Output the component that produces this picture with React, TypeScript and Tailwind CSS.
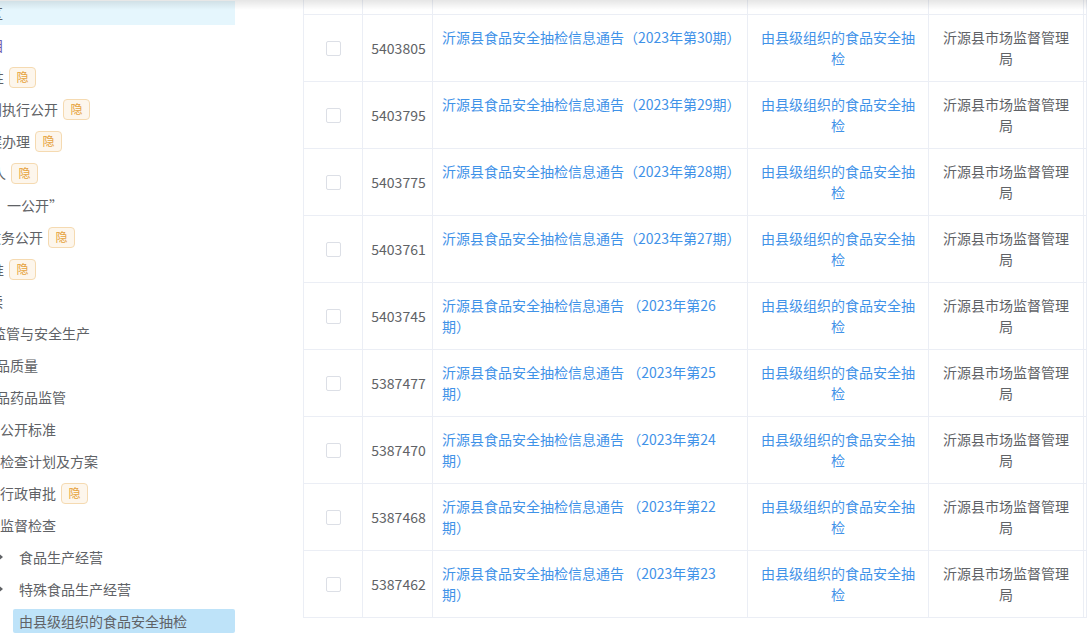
import { type ReactNode } from 'react'

interface TreeRow {
  text: string
  shift: string
  badge?: boolean
  color?: string
  kind?: 'plain' | 'active-top' | 'child' | 'current'
}

interface NoticeRow {
  id: string
  title: string[]
}

const treeRows: TreeRow[] = [
  { text: '区', shift: '-ml-[11px]', kind: 'active-top' },
  { text: '目', shift: '-ml-[10px]', color: 'text-[#6f5fb0]' },
  { text: '性', shift: '-ml-[10px]', badge: true },
  { text: '计划执行公开', shift: '-ml-[26px]', badge: true },
  { text: '建议提案办理', shift: '-ml-[54px]', badge: true },
  { text: '联系人', shift: '-ml-[36px]', badge: true },
  { text: '双随机、一公开”', shift: '-ml-[49px]' },
  { text: '政务公开', shift: '-ml-[13px]', badge: true },
  { text: '准', shift: '-ml-[10px]', badge: true },
  { text: '政策解读', shift: '-ml-[53px]' },
  { text: '食品监管与安全生产', shift: '-ml-[36px]' },
  { text: '产品质量', shift: '-ml-[18px]' },
  { text: '食品药品监管', shift: '-ml-[18px]' },
  { text: '主动公开标准', shift: '-ml-[28px]' },
  { text: '年度检查计划及方案', shift: '-ml-[28px]' },
  { text: '行政审批', shift: 'ml-0', badge: true },
  { text: '监督检查', shift: 'ml-0' },
  { text: '食品生产经营', shift: 'ml-0', kind: 'child' },
  { text: '特殊食品生产经营', shift: 'ml-0', kind: 'child' },
  { text: '由县级组织的食品安全抽检', shift: 'ml-0', kind: 'current' },
]

const notices: NoticeRow[] = [
  { id: '5403805', title: ['沂源县食品安全抽检信息通告（2023年第30期）'] },
  { id: '5403795', title: ['沂源县食品安全抽检信息通告（2023年第29期）'] },
  { id: '5403775', title: ['沂源县食品安全抽检信息通告（2023年第28期）'] },
  { id: '5403761', title: ['沂源县食品安全抽检信息通告（2023年第27期）'] },
  { id: '5403745', title: ['沂源县食品安全抽检信息通告 （2023年第26', '期）'] },
  { id: '5387477', title: ['沂源县食品安全抽检信息通告 （2023年第25', '期）'] },
  { id: '5387470', title: ['沂源县食品安全抽检信息通告 （2023年第24', '期）'] },
  { id: '5387468', title: ['沂源县食品安全抽检信息通告 （2023年第22', '期）'] },
  { id: '5387462', title: ['沂源县食品安全抽检信息通告 （2023年第23', '期）'] },
]

function HiddenTag() {
  return (
    <span className="ml-[5px] inline-flex h-[21px] w-[27px] shrink-0 items-center justify-center rounded-[4px] border border-[#f5dab1] bg-[#fdf6ec] text-[12px] text-[#e6a23c]">
      隐
    </span>
  )
}

function TreeItem({ row }: { row: TreeRow }) {
  const label = (
    <span className={`${row.shift} whitespace-nowrap ${row.color ?? 'text-[#606266]'}`}>{row.text}</span>
  )

  if (row.kind === 'child') {
    return (
      <div className="flex h-8 items-center">
        <div className="flex h-6 items-center">
          <span className="-ml-[2px] h-0 w-0 border-y-[4px] border-l-[5px] border-y-transparent border-l-[#606266]" />
          <span className="ml-[16px] whitespace-nowrap text-[#606266]">{row.text}</span>
        </div>
      </div>
    )
  }

  if (row.kind === 'current') {
    return (
      <div className="flex h-8 items-center">
        <div className="ml-[13px] flex h-6 flex-1 items-center rounded-[2px] bg-[#bee3f9] pl-[6px]">
          <span className="whitespace-nowrap text-[#606266]">{row.text}</span>
        </div>
      </div>
    )
  }

  return (
    <div className="flex h-8 items-center">
      <div className={`flex h-6 flex-1 items-center ${row.kind === 'active-top' ? 'bg-[#e5f6fd]' : ''}`}>
        {label}
        {row.badge && <HiddenTag />}
      </div>
    </div>
  )
}

function Cell({ children, className = '' }: { children?: ReactNode; className?: string }) {
  return <div className={`flex border-b border-r border-[#ebeef5] ${className}`}>{children}</div>
}

export default function App() {
  return (
    <div
      className="relative h-[635px] w-[1087px] overflow-hidden bg-white text-[14px]"
      style={{ fontFamily: '"Noto Sans CJK SC", "Noto Sans", sans-serif' }}
    >
      <div className="flex">
        {/* tree, scrolled sideways */}
        <aside className="w-[235px] shrink-0 overflow-hidden">
          <div className="-mt-[3px]">
            {treeRows.map((row, i) => (
              <TreeItem key={i} row={row} />
            ))}
          </div>
        </aside>

        {/* notices table */}
        <div className="ml-[68px] flex-1">
          <div className="grid grid-cols-[59px_70px_315px_181px_155px_1fr] border-l border-[#ebeef5]">
            {/* tail of the row above */}
            <Cell className="h-[15px]" />
            <Cell className="h-[15px]" />
            <Cell className="h-[15px]" />
            <Cell className="h-[15px]" />
            <Cell className="h-[15px]" />
            <Cell className="h-[15px]" />

            {notices.map((n) => (
              <div key={n.id} className="contents">
                <Cell className="h-[67px] items-center justify-center">
                  <span className="h-[15px] w-[15px] rounded-[2px] border border-[#dcdfe6] bg-white" />
                </Cell>
                <Cell className="h-[67px] items-center justify-center pl-[2px] text-[#606266]">{n.id}</Cell>
                <Cell className="h-[67px] items-center pl-[9px]">
                  <div className="min-h-[42px] leading-[21px] text-[#3f92e8]">
                    {n.title.map((line, i) => (
                      <div key={i} className="whitespace-pre">
                        {line}
                      </div>
                    ))}
                  </div>
                </Cell>
                <Cell className="h-[67px] items-center justify-center px-[10px] text-center leading-[21px] text-[#3f92e8]">
                  由县级组织的食品安全抽检
                </Cell>
                <Cell className="h-[67px] items-center justify-center px-[10px] text-center leading-[21px] text-[#606266]">
                  沂源县市场监督管理局
                </Cell>
                <Cell className="h-[67px]" />
              </div>
            ))}
          </div>
        </div>
      </div>

      {/* header shadow */}
      <div className="pointer-events-none absolute inset-x-0 top-0 h-[10px] bg-linear-to-b from-black/10 to-transparent" />
    </div>
  )
}
